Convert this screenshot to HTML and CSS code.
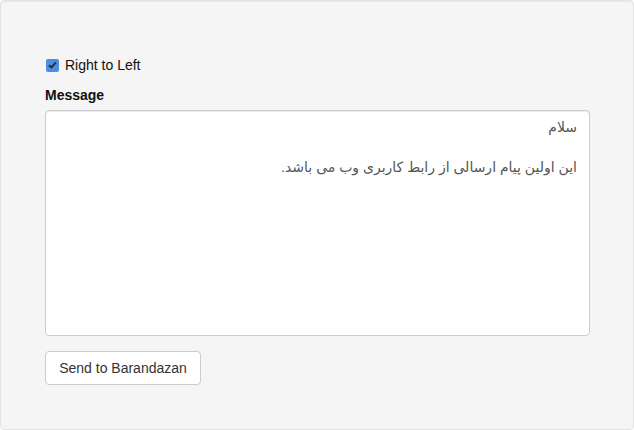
FILE: index.html
```html
<!DOCTYPE html>
<html lang="en">
<head>
<meta charset="utf-8">
<title>Message</title>
<link rel="stylesheet" href="styles.css">
</head>
<body>
<div class="well">
  <div class="checkbox">
    <label class="check-label">
      <span class="check-box"><svg width="9" height="8" viewBox="0 0 9 8"><path d="M1 4.2 L3.4 6.4 L8 1.4" fill="none" stroke="#2b2b2b" stroke-width="1.9"/></svg></span>
      <span>Right to Left</span>
    </label>
  </div>
  <div class="form-group">
    <label class="field-label">Message</label>
    <div class="textarea" dir="rtl"><div>سلام</div><div>&nbsp;</div><div>این اولین پیام ارسالی از رابط کاربری وب می باشد.</div></div>
  </div>
  <button class="btn">Send to Barandazan</button>
</div>
</body>
</html>
```

FILE: styles.css
```css
html, body {
  margin: 0;
  padding: 0;
}
body {
  font-family: "Liberation Sans", "DejaVu Sans", Arial, sans-serif;
  font-size: 14px;
  line-height: 20px;
  color: #111;
  background: #fff;
}
.well {
  box-sizing: border-box;
  width: 634px;
  height: 430px;
  padding: 44px 43px 45px 44px;
  background: #f5f5f5;
  border: 1px solid #e3e3e3;
  border-radius: 4px;
  box-shadow: inset 0 1px 1px rgba(0,0,0,.05);
}
.checkbox {
  margin: 10px 0 10px;
}
.check-label {
  display: flex;
  align-items: center;
  gap: 6px;
  height: 20px;
}
.check-box {
  box-sizing: border-box;
  width: 13px;
  height: 13px;
  margin-left: 1px;
  border-radius: 2px;
  background: #4a8fe2;
  display: flex;
  align-items: center;
  justify-content: center;
}
.check-box svg {
  display: block;
}
.form-group {
  margin-bottom: 15px;
}
.field-label {
  display: block;
  font-weight: bold;
  margin-bottom: 5px;
}
.textarea {
  box-sizing: border-box;
  height: 226px;
  padding: 6px 12px;
  background: #fff;
  border: 1px solid #ccc;
  border-radius: 4px;
  box-shadow: inset 0 1px 1px rgba(0,0,0,.075);
  color: #555;
  text-align: right;
}
.btn {
  display: block;
  box-sizing: border-box;
  width: 156px;
  height: 34px;
  padding: 6px 12px;
  font-family: inherit;
  font-size: 14px;
  line-height: 20px;
  color: #333;
  background: #fff;
  border: 1px solid #ccc;
  border-radius: 4px;
}
```
